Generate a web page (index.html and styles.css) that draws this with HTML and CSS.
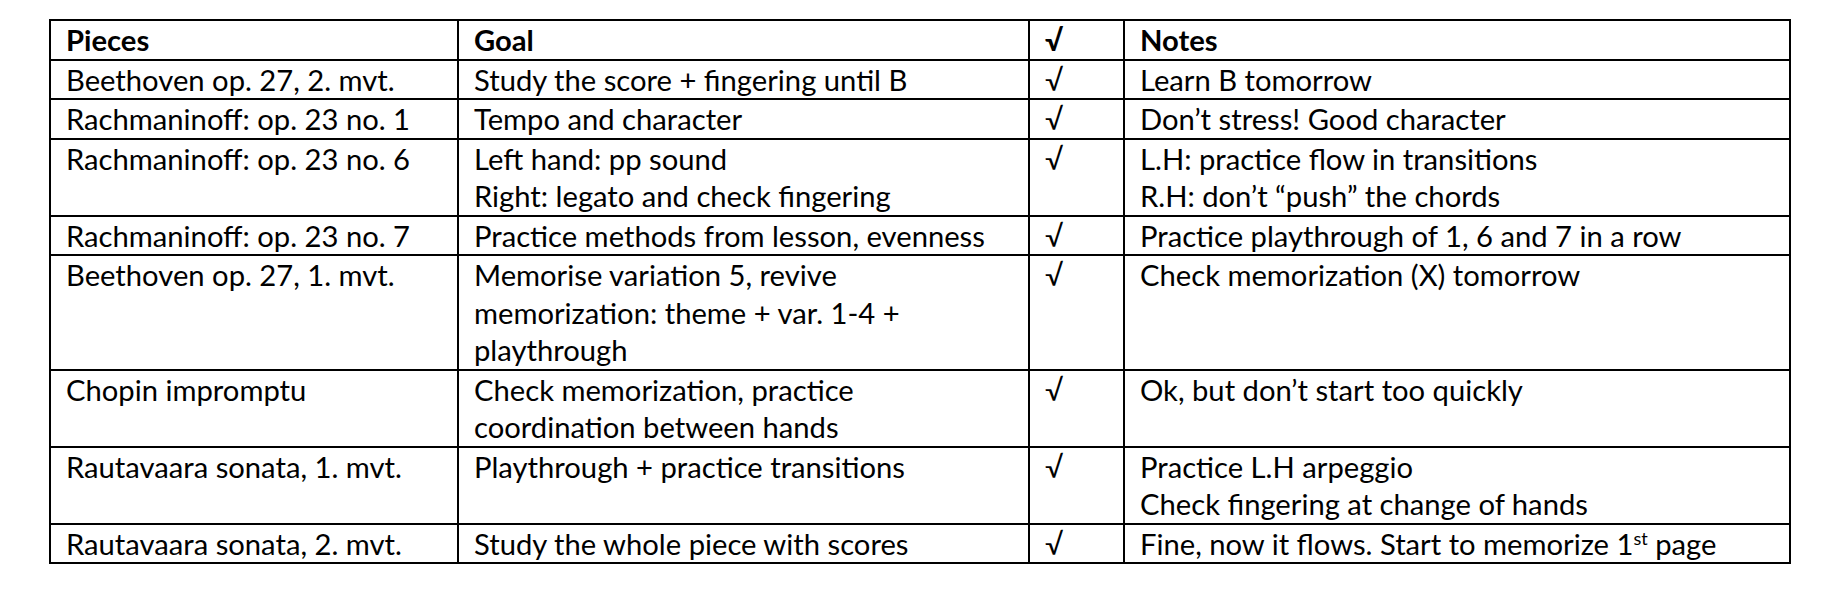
FILE: index.html
```html
<!DOCTYPE html>
<html lang="en">
<head>
<meta charset="utf-8">
<title>Practice plan</title>
<link rel="stylesheet" href="styles.css">
</head>
<body>
<main class="page">
  <table class="plan">
    <colgroup>
      <col class="col-piece">
      <col class="col-goal">
      <col class="col-check">
      <col class="col-notes">
    </colgroup>
    <thead>
      <tr>
        <th>Pieces</th>
        <th>Goal</th>
        <th>√</th>
        <th>Notes</th>
      </tr>
    </thead>
    <tbody>
      <tr>
        <td>Beethoven op. 27, 2. mvt.</td>
        <td>Study the score + fingering until B</td>
        <td>√</td>
        <td>Learn B tomorrow</td>
      </tr>
      <tr>
        <td>Rachmaninoff: op. 23 no. 1</td>
        <td>Tempo and character</td>
        <td>√</td>
        <td>Don’t stress! Good character</td>
      </tr>
      <tr>
        <td>Rachmaninoff: op. 23 no. 6</td>
        <td>Left hand: pp sound<br>Right: legato and check fingering</td>
        <td>√</td>
        <td>L.H: practice flow in transitions<br>R.H: don’t “push” the chords</td>
      </tr>
      <tr>
        <td>Rachmaninoff: op. 23 no. 7</td>
        <td>Practice methods from lesson, evenness</td>
        <td>√</td>
        <td>Practice playthrough of 1, 6 and 7 in a row</td>
      </tr>
      <tr>
        <td>Beethoven op. 27, 1. mvt.</td>
        <td>Memorise variation 5, revive<br>memorization: theme + var. 1-4 +<br>playthrough</td>
        <td>√</td>
        <td>Check memorization (X) tomorrow</td>
      </tr>
      <tr>
        <td>Chopin impromptu</td>
        <td>Check memorization, practice<br>coordination between hands</td>
        <td>√</td>
        <td>Ok, but don’t start too quickly</td>
      </tr>
      <tr>
        <td>Rautavaara sonata, 1. mvt.</td>
        <td>Playthrough + practice transitions</td>
        <td>√</td>
        <td>Practice L.H arpeggio<br>Check fingering at change of hands</td>
      </tr>
      <tr>
        <td>Rautavaara sonata, 2. mvt.</td>
        <td>Study the whole piece with scores</td>
        <td>√</td>
        <td>Fine, now it flows. Start to memorize 1<sup class="ord">st</sup> page</td>
      </tr>
    </tbody>
  </table>
</main>
</body>
</html>
```

FILE: styles.css
```css
html, body {
  margin: 0;
  padding: 0;
  background: #ffffff;
}

.page {
  padding: 19px 0 0 49px;
}

.plan {
  width: 1740px;
  table-layout: fixed;
  border-collapse: collapse;
  font-family: "Lato", "Open Sans", sans-serif;
  font-size: 29.2px;
  line-height: 37.5px;
  color: #000000;
}

.col-piece { width: 408px; }
.col-goal { width: 571px; }
.col-check { width: 95px; }
.col-notes { width: 666px; }

.plan th,
.plan td {
  border: 2px solid #000000;
  padding: 0 0 0 15px;
  text-align: left;
  vertical-align: top;
  white-space: nowrap;
  overflow: hidden;
}

.plan th {
  font-weight: 700;
}

.plan td {
  font-weight: 400;
}

.ord {
  font-size: 0.62em;
  line-height: 0;
  vertical-align: 0.55em;
}
```
